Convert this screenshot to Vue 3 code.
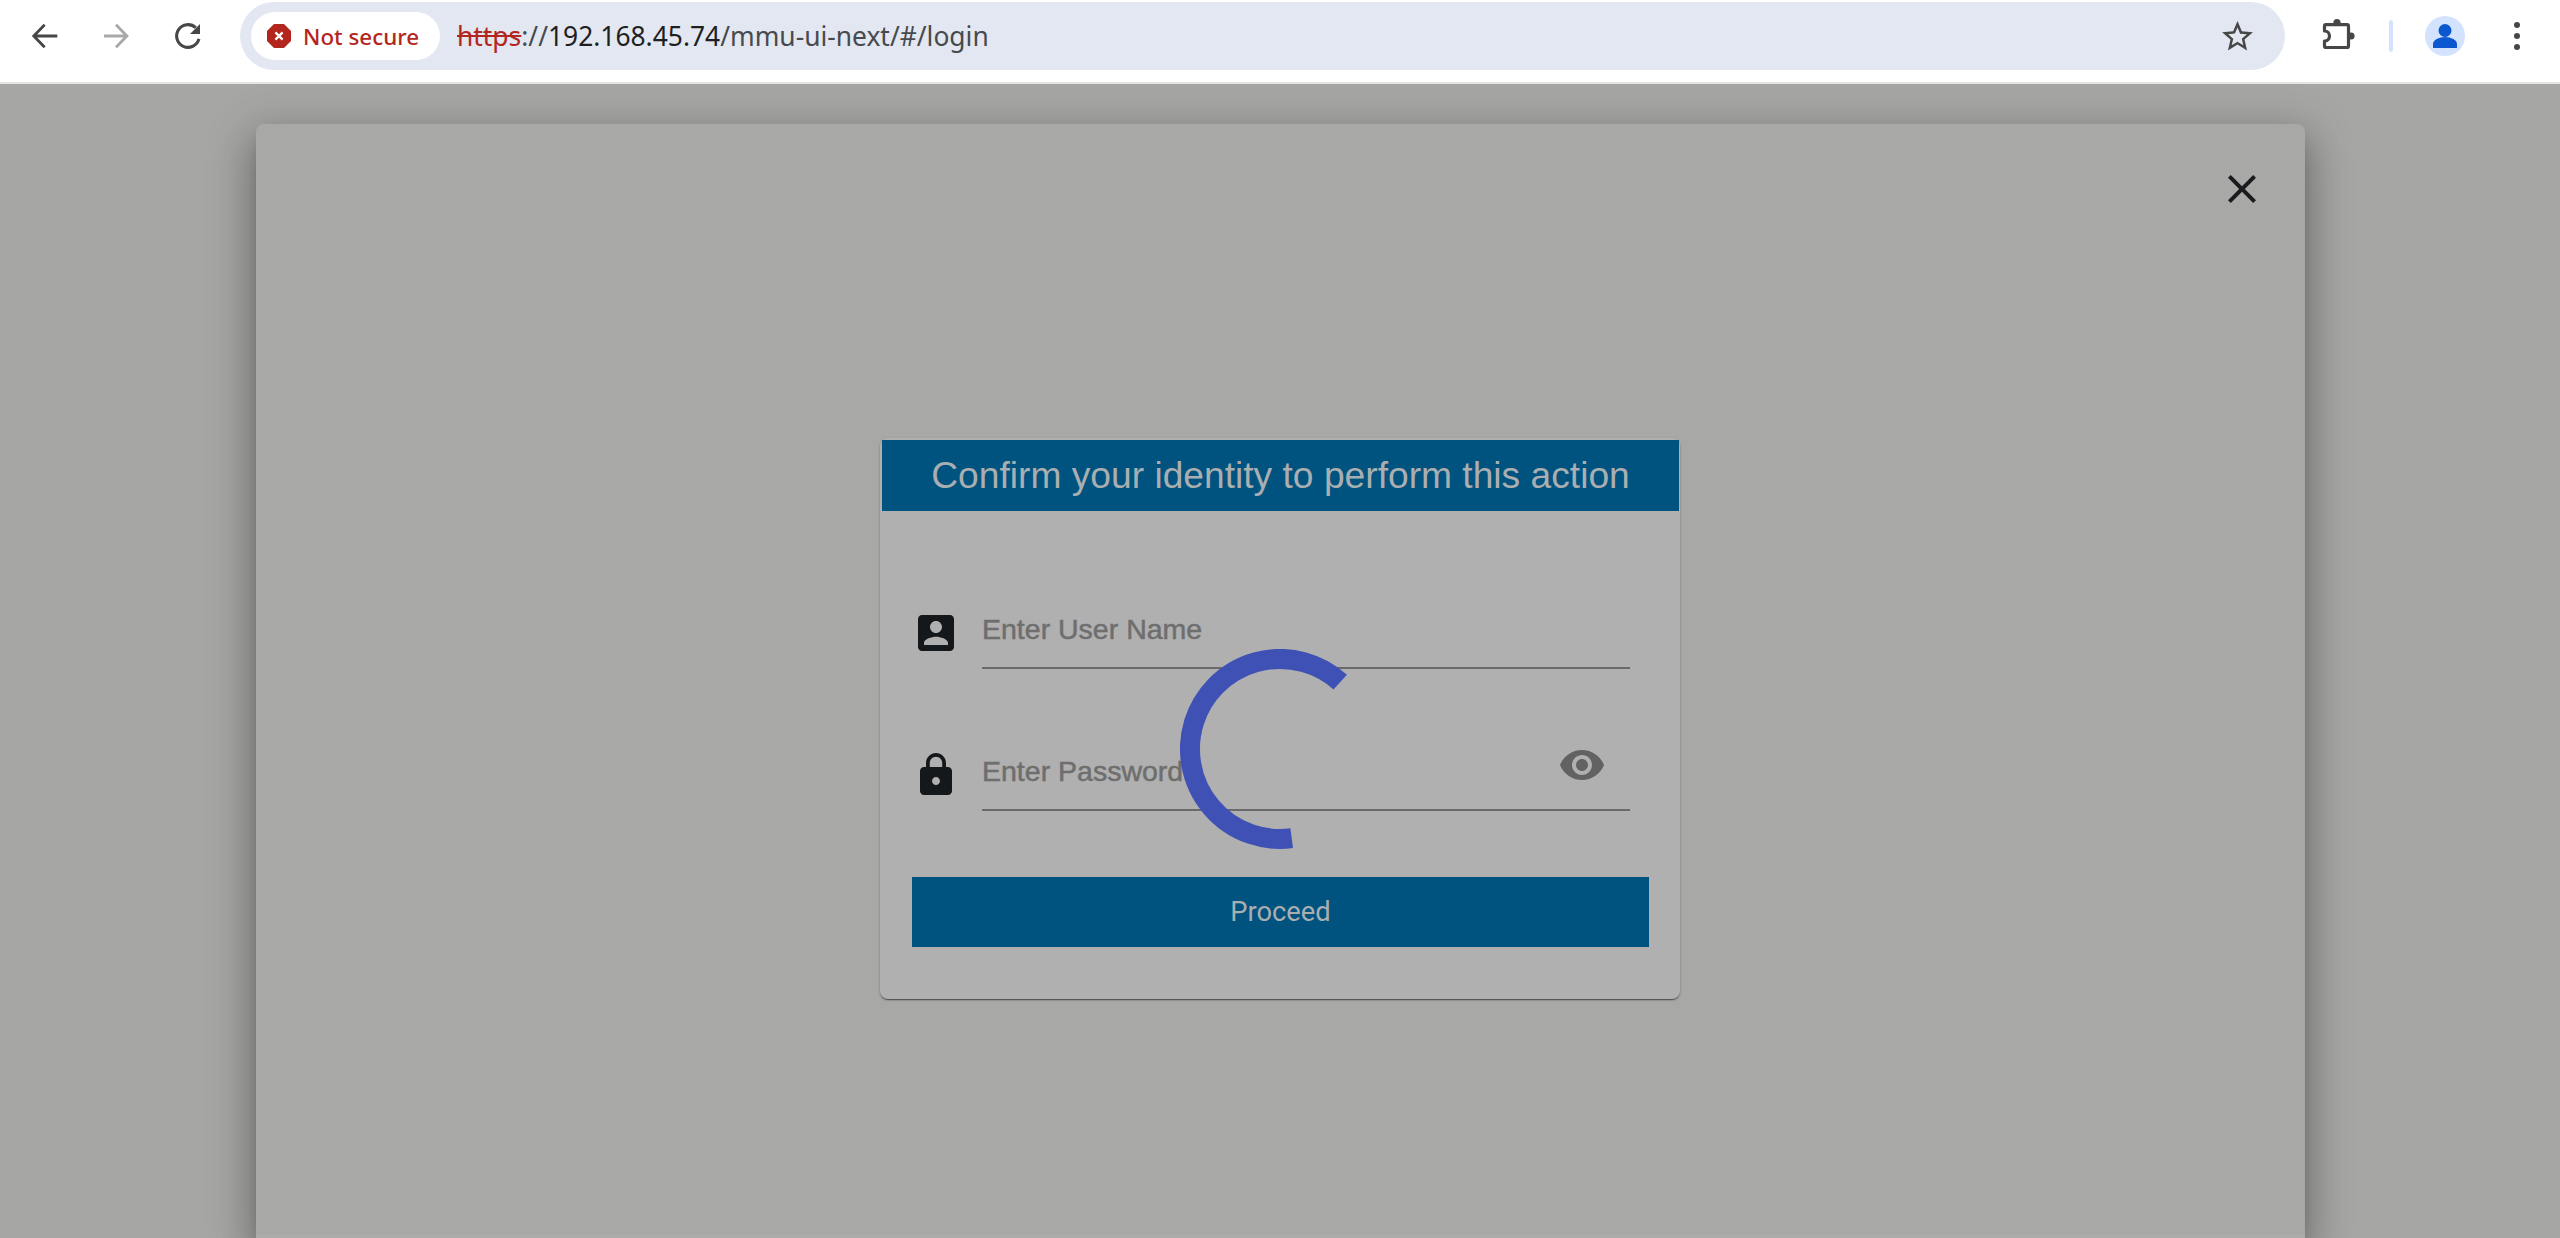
<script setup>
const title = 'Confirm your identity to perform this action'
</script>

<template>
  <div class="page">
    <header class="toolbar">
      <div class="nav">
        <svg class="nav-icon" viewBox="0 0 24 24"><path d="M22 12H5M12.5 3.5 4.3 12l8.2 8.5" fill="none" stroke="#474747" stroke-width="2.1" /></svg>
        <svg class="nav-icon" viewBox="0 0 24 24"><path d="M3 12h17M12 3.5l8.2 8.5-8.2 8.5" fill="none" stroke="#a8a8a8" stroke-width="2.1" /></svg>
        <svg class="nav-icon" viewBox="0 0 24 24"><path d="M20.2 14.2A8.5 8.5 0 1 1 17.8 5.8" fill="none" stroke="#474747" stroke-width="2.3" /><path d="M21 3v7.5h-7.5z" fill="#474747" /></svg>
      </div>
      <div class="omnibox">
        <div class="chip">
          <svg class="chip-icon" viewBox="0 0 24 24">
            <path d="M7 0h10l7 7v10l-7 7H7l-7-7V7z" fill="#b3261e" />
            <path d="M8.4 8.4l7.2 7.2M15.6 8.4l-7.2 7.2" stroke="#fff" stroke-width="2.2" />
          </svg>
          <span class="chip-text">Not secure</span>
        </div>
        <div class="url"><span class="scheme">https</span><span class="host-sep">://</span><span class="host">192.168.45.74</span>/mmu-ui-next/#/login</div>
        <svg class="star" viewBox="0 0 24 24"><path d="M22 9.24l-7.19-.62L12 2 9.19 8.63 2 9.24l5.46 4.73L5.82 21 12 17.27 18.18 21l-1.63-7.03L22 9.24zM12 15.4l-3.76 2.27 1-4.28-3.32-2.88 4.38-.38L12 6.1l1.71 4.04 4.38.38-3.32 2.88 1 4.28L12 15.4z" fill="#474747" /></svg>
      </div>
      <svg class="ext" viewBox="0 0 40 40">
        <circle cx="17" cy="6.5" r="3.6" fill="#474747" />
        <circle cx="31" cy="20" r="3.6" fill="#474747" />
        <path d="M6 8.7H27a1.5 1.5 0 0 1 1.5 1.5V30a1.5 1.5 0 0 1-1.5 1.5H6a1.5 1.5 0 0 1-1.5-1.5V25a5 5 0 0 0 0-10V10.200a1.500 1.500 0 0 1 1.500-1.500z" fill="#fff" stroke="#474747" stroke-width="3.200" stroke-linejoin="round" />
      </svg>
      <div class="divider"></div>
      <div class="avatar">
        <svg viewBox="0 0 40 40" class="avatar-icon"><circle cx="20" cy="14.500" r="6.500" fill="#0b57d0" /><path d="M8 32v-4c0-4 6-7 12-7s12 3 12 7v4z" fill="#0b57d0" /></svg>
      </div>
      <div class="dots"><i></i><i></i><i></i></div>
    </header>

    <main class="backdrop">
      <section class="dialog">
        <svg class="close" viewBox="0 0 24 24"><path d="M19 6.41 17.59 5 12 10.59 6.41 5 5 6.41 10.59 12 5 17.59 6.41 19 12 13.41 17.59 19 19 17.59 13.41 12z" fill="#1a1b1c" /></svg>
        <div class="card">
          <h1 class="card-title">{{ title }}</h1>
          <form class="form" @submit.prevent>
            <div class="row">
              <svg class="row-icon" viewBox="0 0 24 24"><path d="M3 5v14c0 1.1.89 2 2 2h14c1.1 0 2-.9 2-2V5c0-1.1-.9-2-2-2H5c-1.11 0-2 .9-2 2zm12 4c0 1.66-1.34 3-3 3s-3-1.34-3-3 1.34-3 3-3 3 1.34 3 3zm-9 8c0-2 4-3.1 6-3.1s6 1.1 6 3.1v1H6v-1z" fill="#15181b" /></svg>
              <div class="field"><span class="placeholder">Enter User Name</span></div>
            </div>
            <div class="row">
              <svg class="row-icon" viewBox="0 0 24 24"><path d="M18 8h-1V6c0-2.76-2.24-5-5-5S7 3.24 7 6v2H6c-1.1 0-2 .9-2 2v10c0 1.1.9 2 2 2h12c1.1 0 2-.9 2-2V10c0-1.1-.9-2-2-2zm-6 9c-1.1 0-2-.9-2-2s.9-2 2-2 2 .9 2 2-.9 2-2 2zm3.1-9H8.9V6c0-1.71 1.39-3.1 3.1-3.1 1.71 0 3.1 1.39 3.1 3.1v2z" fill="#15181b" /></svg>
              <div class="field">
                <span class="placeholder">Enter Password</span>
                <svg class="eye" viewBox="0 0 24 24"><path d="M12 4.5C7 4.5 2.73 7.61 1 12c1.73 4.39 6 7.5 11 7.5s9.27-3.11 11-7.5c-1.73-4.39-6-7.5-11-7.5zM12 17c-2.76 0-5-2.24-5-5s2.24-5 5-5 5 2.24 5 5-2.24 5-5 5zm0-8c-1.66 0-3 1.34-3 3s1.34 3 3 3 3-1.34 3-3-1.34-3-3-3z" fill="#626262" /></svg>
              </div>
            </div>
            <button class="proceed" type="button">Proceed</button>
          </form>
        </div>
        <svg class="spinner" viewBox="0 0 200 200">
          <path d="M160.200 33.100A90 90 0 1 0 111.700 189.200" fill="none" stroke="#3f51b5" stroke-width="20" />
        </svg>
        <div class="dialog-foot"></div>
      </section>
    </main>
  </div>
</template>

<style>
html, body { margin: 0; background: #a6a6a4; }
</style>

<style scoped>
.page {
  width: 2560px;
  height: 1238px;
  display: flex;
  flex-direction: column;
  overflow: hidden;
}
.toolbar {
  height: 82px;
  flex: none;
  background: #fff;
  border-bottom: 2px solid #e5e5e3;
  display: flex;
  align-items: center;
  padding-left: 28px;
  position: relative;
  z-index: 2;
}
.nav { display: flex; gap: 40px; margin-top: -10px; }
.nav-icon { width: 32px; height: 32px; display: block; }
.omnibox {
  margin-left: 36px;
  width: 2045px;
  height: 68px;
  margin-top: -10px;
  border-radius: 34px;
  background: #e2e7f1;
  display: flex;
  align-items: center;
  padding-left: 11px;
  box-sizing: border-box;
}
.chip {
  width: 189px;
  height: 48px;
  border-radius: 24px;
  background: #fff;
  display: flex;
  align-items: center;
  padding-left: 16px;
  box-sizing: border-box;
  flex: none;
}
.chip-icon { width: 24px; height: 24px; flex: none; }
.chip-text {
  margin-left: 12px;
  font: 500 22.4px "Noto Sans", sans-serif;
  color: #b3261e;
  white-space: nowrap;
}
.url {
  margin-left: 17px;
  font: 400 26.4px "Noto Sans", sans-serif;
  color: #474a4e;
  white-space: nowrap;
  flex: 1;
}
.scheme { color: #b3261e; text-decoration: line-through; }
.host { color: #1f1f1f; }
.star { width: 37px; height: 37px; margin-right: 29px; flex: none; }
.ext { width: 40px; height: 40px; margin-left: 35px; margin-top: -10px; flex: none; }
.divider {
  width: 4px;
  height: 32px;
  margin-left: 29px;
  background: #d3e3fd;
  border-radius: 2px;
  margin-top: -10px;
}
.avatar {
  width: 40px;
  height: 40px;
  margin-left: 32px;
  margin-top: -10px;
  border-radius: 50%;
  background: #d3e3fd;
  flex: none;
}
.avatar-icon { width: 40px; height: 40px; display: block; }
.dots {
  margin-left: 49px;
  margin-top: -10px;
  display: flex;
  flex-direction: column;
  gap: 5px;
}
.dots i { width: 6px; height: 6px; border-radius: 50%; background: #474747; display: block; }
.backdrop {
  flex: 1;
  min-height: 0;
  padding: 40px 255px 0 256px;
  background: #a6a6a4;
  display: flex;
}
.dialog {
  flex: 1;
  position: relative;
  background: #a8a8a6;
  border-radius: 8px 8px 0 0;
  box-shadow: 0 11px 15px -7px rgba(0,0,0,.3), 0 24px 38px 3px rgba(0,0,0,.2), 0 9px 46px 8px rgba(0,0,0,.16);
  display: flex;
  flex-direction: column;
  align-items: center;
  padding: 314px 1px 0 0;
  box-sizing: border-box;
}
.close { position: absolute; top: 41px; right: 39px; width: 48px; height: 48px; }
.card {
  width: 800px;
  height: 561px;
  flex: none;
  background: #b0b0b0;
  border-radius: 8px;
  box-shadow: 0 2px 1px -1px rgba(0,0,0,.3), 0 1px 1px rgba(0,0,0,.2), 0 1px 3px rgba(0,0,0,.2);
  box-sizing: border-box;
  padding: 2px 1px 0 2px;
}
.card-title {
  margin: 0;
  height: 71px;
  background: #00527f;
  color: #a9aeb1;
  font: 400 37.2px/70px "Liberation Sans", Arial, sans-serif;
  text-align: center;
}
.form { padding: 88px 30px 0; }
.row { display: flex; gap: 22px; height: 70px; margin-bottom: 72px; }
.row:nth-child(2) { margin-bottom: 66px; }
.row-icon { width: 48px; height: 48px; margin: 10px 0 0; flex: none; }
.field {
  width: 648px;
  height: 70px;
  box-sizing: border-box;
  border-bottom: 2px solid #6a6a6a;
  display: flex;
  justify-content: space-between;
  padding-right: 24px;
}
.placeholder {
  font: 400 28.5px/60px "Liberation Sans", sans-serif;
  -webkit-text-stroke: 0.5px #6e6e6e;
  color: #6e6e6e;
  white-space: nowrap;
}
.eye { width: 48px; height: 48px; flex: none; }
.proceed {
  display: block;
  width: 737px;
  height: 70px;
  border: 0;
  padding: 0;
  background: #00527f;
  color: #a9aeb1;
  font: 400 27.3px Roboto, sans-serif;
}
.spinner {
  position: absolute;
  left: 924px;
  top: 525px;
  width: 200px;
  height: 200px;
}
.dialog-foot {
  position: absolute;
  left: 0;
  right: 0;
  bottom: 0;
  height: 4px;
  background: #acacaa;
}
</style>
